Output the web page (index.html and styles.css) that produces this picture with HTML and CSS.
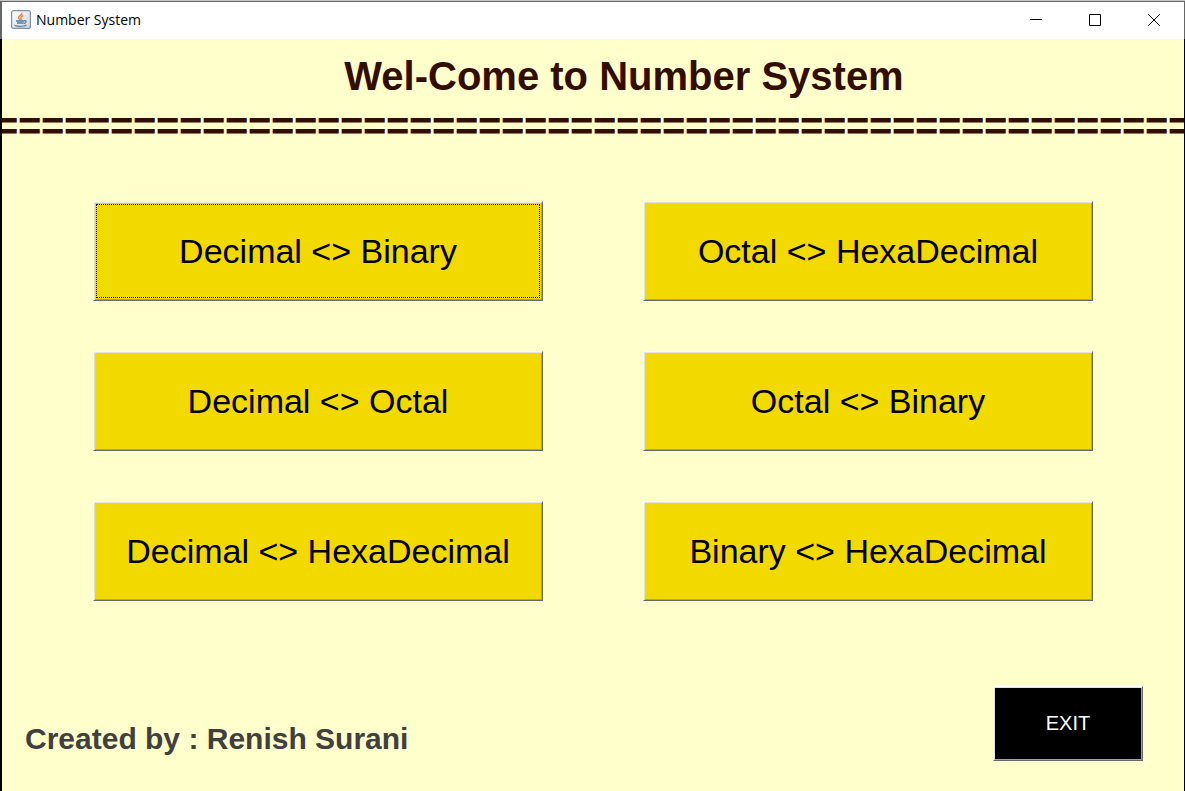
FILE: index.html
```html
<!DOCTYPE html>
<html lang="en">
<head>
<meta charset="utf-8">
<title>Number System</title>
<link rel="stylesheet" href="styles.css">
</head>
<body>
<div class="window">
  <header class="titlebar">
    <svg class="app-icon" width="20" height="20" viewBox="0 0 20 20" aria-hidden="true">
      <defs>
        <linearGradient id="tile" x1="0" y1="0" x2="1" y2="1">
          <stop offset="0" stop-color="#fff"/>
          <stop offset="1" stop-color="#cfd7de"/>
        </linearGradient>
      </defs>
      <rect x=".6" y=".6" width="18.800" height="17.800" rx="2" fill="url(#tile)" stroke="#7d90a6" stroke-width="1.200"/>
      <path d="M10.500 2.800c1.300 2-3.300 3-3 5 .1 1 1 1.600 1.800 2.200M12.200 5.500c-2.200 1-3.200 2-1.600 4.500" fill="none" stroke="#ee8138" stroke-width="1.400"/>
      <path d="M5 11h8M6 13h6.500" fill="none" stroke="#4f7da3" stroke-width="1.500"/>
      <path d="M13 10.800c3.200-.8 2.500 2.200-.3 2.800M4.200 14.800c-1.800 2 9.500 2 11.300 0" fill="none" stroke="#4f7da3" stroke-width="1.200"/>
    </svg>
    <span class="app-name">Number System</span>
    <div class="window-controls">
      <button class="control" type="button" aria-label="Minimize"><svg width="12" height="12" viewBox="0 0 12 12"><path d="M0 5.500h12"/></svg></button>
      <button class="control" type="button" aria-label="Maximize"><svg width="12" height="12" viewBox="0 0 12 12"><path d="M.5.5h11v11H.5z"/></svg></button>
      <button class="control" type="button" aria-label="Close"><svg width="12" height="12" viewBox="0 0 12 12"><path d="M.3.3l11.400 11.400M11.700.3L.3 11.700"/></svg></button>
    </div>
  </header>
  <main class="content">
    <h1 class="heading">Wel-Come to Number System</h1>
    <div class="rule" aria-hidden="true">
      <span>=</span><span>=</span><span>=</span><span>=</span><span>=</span><span>=</span><span>=</span><span>=</span><span>=</span><span>=</span><span>=</span><span>=</span><span>=</span>
      <span>=</span><span>=</span><span>=</span><span>=</span><span>=</span><span>=</span><span>=</span><span>=</span><span>=</span><span>=</span><span>=</span><span>=</span><span>=</span>
      <span>=</span><span>=</span><span>=</span><span>=</span><span>=</span><span>=</span><span>=</span><span>=</span><span>=</span><span>=</span><span>=</span><span>=</span><span>=</span>
      <span>=</span><span>=</span><span>=</span><span>=</span><span>=</span><span>=</span><span>=</span><span>=</span><span>=</span><span>=</span><span>=</span><span>=</span><span>=</span>
    </div>
    <div class="choices">
      <button class="button choice focused" type="button">Decimal &lt;&gt; Binary</button>
      <button class="button choice" type="button">Octal &lt;&gt; HexaDecimal</button>
      <button class="button choice" type="button">Decimal &lt;&gt; Octal</button>
      <button class="button choice" type="button">Octal &lt;&gt; Binary</button>
      <button class="button choice" type="button">Decimal &lt;&gt; HexaDecimal</button>
      <button class="button choice" type="button">Binary &lt;&gt; HexaDecimal</button>
    </div>
    <footer class="footer">
      <p class="credit">Created by : Renish Surani</p>
      <button class="button exit" type="button">EXIT</button>
    </footer>
  </main>
</div>
</body>
</html>
```
FILE: styles.css
```css
* {
  box-sizing: border-box;
}

body {
  margin: 0;
  background: #c8c8c8;
  font-family: "Liberation Sans", Arial, sans-serif;
}

.window {
  display: flex;
  flex-direction: column;
  min-height: 100vh;
  padding-top: 1px;
}

.titlebar {
  display: flex;
  align-items: center;
  height: 38px;
  padding: 0 1px 2px 9px;
  background: #fff;
  border: solid #666;
  border-width: 1px 1px 0 2px;
}

.app-name {
  margin-left: 5px;
  font: 14px/20px "Open Sans", "Noto Sans", sans-serif;
  color: #000;
}

.window-controls {
  display: flex;
  align-self: stretch;
  margin-left: auto;
}

.control {
  display: flex;
  align-items: center;
  justify-content: center;
  width: 59px;
  padding: 0;
  border: 0;
  background: none;
}

.control path {
  fill: none;
  stroke: #000;
}

.content {
  display: flex;
  flex: 1;
  flex-direction: column;
  background: #ffffcc;
  border: solid #000;
  border-width: 0 1px 0 2px;
}

.heading {
  margin: 14px 0 0 62px;
  font-size: 40px;
  line-height: 46px;
  text-align: center;
  color: #330d00;
}

.rule {
  display: flex;
  justify-content: center;
  margin-top: 4px;
  overflow: hidden;
  font-size: 40px;
  font-weight: bold;
  line-height: 46px;
  color: #330d00;
}

.rule span {
  flex: none;
  width: 23px;
}

.choices {
  display: grid;
  grid-template-columns: 1fr 1fr;
  gap: 50px 100px;
  padding: 52px 91px 0;
}

.button {
  padding: 0;
  border: 1px solid;
  border-color: #fff #696969 #696969 #fff;
  box-shadow: inset 1px 1px #e3e3e3, inset -1px -1px #a0a0a0;
  font-family: inherit;
}

.choice {
  height: 100px;
  background: #f2d900;
  font-size: 34px;
  color: #000;
}

.focused {
  outline: 1px dotted #000;
  outline-offset: -4px;
}

.footer {
  display: flex;
  align-items: flex-end;
  justify-content: space-between;
  margin-top: auto;
  padding: 0 41px 30px 23px;
}

.credit {
  margin: 0 0 5px;
  font-size: 30px;
  font-weight: bold;
  line-height: 34px;
  color: #404040;
}

.exit {
  width: 150px;
  height: 75px;
  background: #000;
  font-size: 20px;
  color: #fff;
}
```
